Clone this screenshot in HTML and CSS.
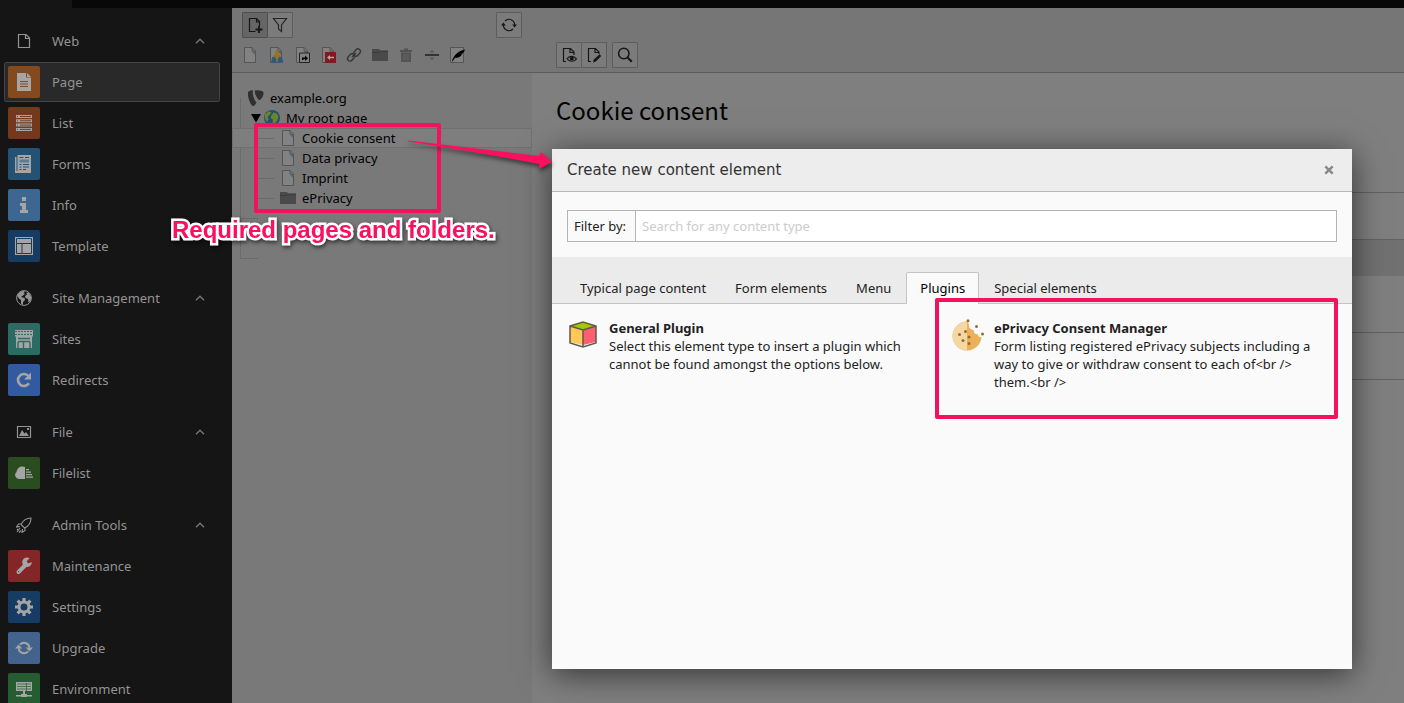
FILE: index.html
```html
<!DOCTYPE html>
<html lang="en">
<head>
<meta charset="utf-8">
<title>Create new content element</title>
<link rel="stylesheet" href="styles.css">
</head>
<body>
<svg class="defs" aria-hidden="true">
  <defs>
    <symbol id="chevron" viewBox="0 0 10 6"><path d="M1 5.2 5 1.2 9 5.2" fill="none" stroke="currentColor" stroke-width="1.4"/></symbol>
    <symbol id="doc" viewBox="0 0 16 16"><path d="M2.500.5h7.500l3.500 3.500v11.500h-11z" fill="#828282" stroke="#555"/><path d="M10 .5v3.500h3.500v4L10 4z" fill="#636363" stroke="#555" stroke-width=".6"/></symbol>
    <symbol id="folder" viewBox="0 0 16 16"><path d="M0 2h7l1 1.500h8V14H0z" fill="#4a4a4a"/><path d="M0 5.500h7l1-1.200h8" fill="none" stroke="#3b3b3b"/></symbol>
    <symbol id="page-outline" viewBox="0 0 16 16"><path d="M2.500 1.500h7.500l3.500 3.500v9.500h-11zM9.500 1.500v4h4" fill="none" stroke="currentColor" stroke-width="1.200"/></symbol>
    <symbol id="sync" viewBox="0 0 18 16"><path d="M5 4.600A5.300 5.300 0 0 1 14.300 7.500M13 11.400A5.300 5.300 0 0 1 3.700 8.500" fill="none" stroke="currentColor" stroke-width="2"/><path d="M10.800 7.500H18L14.400 11.500zM0 8.500h7.200L3.600 4.500z" fill="currentColor"/></symbol>
    <symbol id="sync-thin" viewBox="0 0 16 16"><path d="M4 4A5.600 5.600 0 0 1 13.600 8M12 12A5.600 5.600 0 0 1 2.400 8" fill="none" stroke="currentColor" stroke-width="1.200"/><path d="M11.200 7.500h4.800L13.600 10.500zM0 8.500h4.800L2.400 5.500z" fill="currentColor"/></symbol>
  </defs>
</svg>

<div class="topbar"></div>
<div class="app">
  <nav class="sidebar" aria-label="Modules">
    <section class="group">
      <button class="row head"><svg class="glyph" viewBox="0 0 16 16"><use href="#page-outline"/></svg><span>Web</span><svg class="chev"><use href="#chevron"/></svg></button>
      <a class="row active" href="#"><span class="tile orange"><svg viewBox="0 0 18 18"><path d="M2 0h9v4.500h5V18H2zM12 0l4 4h-4z"/><path d="M5 8.500h8M5 11h8M5 13.500h8" stroke="#84491c"/></svg></span><span>Page</span></a>
      <a class="row" href="#"><span class="tile rust"><svg viewBox="0 0 18 18"><path d="M1 1h16v3H1zM1 5.300h16v3H1zM1 9.600h16v3H1zM1 13.900h16v3H1z"/><path d="M5 2.500h11M5 6.800h11M5 11.100h11M5 15.400h11M2 2.500h1M2 6.800h1M2 11.100h1M2 15.400h1" stroke="#74391d"/></svg></span><span>List</span></a>
      <a class="row" href="#"><span class="tile blue"><svg viewBox="0 0 18 18"><path d="M0 2h1.500v14h1V0H16v18H0z"/><path d="M4.500 2.500h4M10 2.500h4M4.500 9.500h2M8 9.500h6M4.500 12h2M8 12h6M4.500 14.500h2M8 14.500h3" stroke="#245274"/><path d="M4.500 4.500h9.500v3H4.500z" fill="#66798a"/></svg></span><span>Forms</span></a>
      <a class="row" href="#"><span class="tile light"><svg viewBox="0 0 18 18"><path d="M7 1h4v4H7zM5 7h6v7h2v3H5v-3h2v-4H5z"/></svg></span><span>Info</span></a>
      <a class="row" href="#"><span class="tile navy"><svg viewBox="0 0 18 18"><path d="M0 0h18v18H0z"/><path d="M1.500 6.500V1.500h15v15h-15v-10h15M7 7v9.500" fill="none" stroke="#173c63"/></svg></span><span>Template</span></a>
    </section>
    <section class="group">
      <button class="row head"><svg class="glyph" viewBox="0 0 16 16"><circle cx="8" cy="8" r="7.400" fill="none" stroke="currentColor" stroke-width="1"/><path d="M1 5.500 4 2l3-1.200 2 1L7.500 3 9 4 7 5.500 5 7l3.500 1L9 10l-2 2v3l-2-1.500V10L3 8.500zM10 2.500l3 .5 2.200 4-.7 4-2 1.500L12 9l-2.500-1L9 6l2-1.500z" fill="currentColor"/></svg><span>Site Management</span><svg class="chev"><use href="#chevron"/></svg></button>
      <a class="row" href="#"><span class="tile teal"><svg viewBox="0 0 18 18"><path d="M0 0h18v6.500H0zM1 6h16v12H1z"/><path d="M0 1.500h18M0 4.500h18" stroke="#2a6c63" stroke-dasharray="2 1"/><path d="M3 8.500h12M3 11.500h12M3 12v6M15 12v6M8.500 12v6" stroke="#2a6c63" stroke-width="1.400"/></svg></span><span>Sites</span></a>
      <a class="row" href="#"><span class="tile royal"><svg viewBox="0 0 18 18"><path d="M14 12.300A6 6 0 1 1 13.500 5" fill="none" stroke="#a5a5a5" stroke-width="2.600"/><path d="M16 1.500v7H9z"/></svg></span><span>Redirects</span></a>
    </section>
    <section class="group">
      <button class="row head"><svg class="glyph" viewBox="0 0 16 16"><path d="M1.500 2.500h13v11h-13z" fill="none" stroke="currentColor" stroke-width="1.200"/><path d="M3 12l3-6 2.500 3.500L10 8l3 4zM11 4h2v2h-2z" fill="currentColor"/></svg><span>File</span><svg class="chev"><use href="#chevron"/></svg></button>
      <a class="row" href="#"><span class="tile green"><svg viewBox="0 0 18 18"><path d="M10 3v12H4a4 4 0 0 1-2.500-7C2 5 4 2.500 7 2.500zM11 5h3v1.200h-3zM11 7.500h5v1.200h-5zM11 10h6v1.200h-6zM11 12.500h7v1.200h-7z"/></svg></span><span>Filelist</span></a>
    </section>
    <section class="group">
      <button class="row head"><svg class="glyph" viewBox="0 0 16 16"><path d="M15 1C10 1 7 3.500 5 7.500L8.500 11C13 9 15 6 15 1zM5.500 7H2.500l-2 3 3.500-.5M9 10.500v3l-3 2 .5-3.500M1 15l3-4M3 15.500l2-2M1 13l1-1" fill="none" stroke="currentColor" stroke-width="1.100"/></svg><span>Admin Tools</span><svg class="chev"><use href="#chevron"/></svg></button>
      <a class="row" href="#"><span class="tile red"><svg viewBox="0 0 18 18"><path d="M3.500 15 11 7.500" fill="none" stroke="#a5a5a5" stroke-width="4" stroke-linecap="round"/><path d="M14.500 1.200A4.800 4.800 0 1 0 16.800 5L13.500 6.500 11.500 4.500z"/><circle cx="3.700" cy="14.600" r=".7" fill="#842528"/></svg></span><span>Maintenance</span></a>
      <a class="row" href="#"><span class="tile navy"><svg viewBox="0 0 18 18"><circle cx="9" cy="9" r="5" fill="none" stroke="#a5a5a5" stroke-width="3"/><path d="M9 0v3.500M9 14.500V18M0 9h3.500M14.500 9H18M2.600 2.600l2.500 2.500M12.900 12.900l2.500 2.500M2.600 15.400l2.500-2.500M12.900 5.100l2.500-2.500" stroke="#a5a5a5" stroke-width="3.200"/></svg></span><span>Settings</span></a>
      <a class="row" href="#"><span class="tile steel"><svg viewBox="0 0 18 16"><use href="#sync"/></svg></span><span>Upgrade</span></a>
      <a class="row" href="#"><span class="tile forest"><svg viewBox="0 0 18 18"><path d="M1 2h16v9H1zM8 11h2v3h2v1h5v1.500h-5V17H6v-.5H1V15h5v-1h2z"/><path d="M2 4h14M2 6.500h14M2 9h14M11.500 3v8" stroke="#265c32" stroke-width=".7"/></svg></span><span>Environment</span></a>
    </section>
  </nav>

  <div class="workspace">
    <header class="tree-head">
      <div class="bar">
        <div class="btns">
          <button class="btn pressed" aria-label="New page"><svg viewBox="0 0 16 16"><path d="M8.500 14.500h-6v-13h7l3 3V9M9.500 1.500v3.500h3" fill="none" stroke="#161616" stroke-width="1.200"/><path d="M12 9v7M8.500 12.500h7" stroke="#161616" stroke-width="1.800"/></svg></button>
          <button class="btn" aria-label="Filter"><svg viewBox="0 0 16 16"><path d="M1.500 1.500h13L9.500 8v6.500l-3-2.500V8z" fill="none" stroke="#262626" stroke-width="1.200"/></svg></button>
        </div>
        <button class="btn" aria-label="Refresh"><svg viewBox="0 0 16 16"><use href="#sync-thin"/></svg></button>
      </div>
      <div class="types">
        <svg viewBox="0 0 16 16"><use href="#doc"/></svg>
        <svg viewBox="0 0 16 16"><use href="#doc"/><path d="M5 14l1-6 1.500-1.500a2 2 0 1 1 3 0L12 8l1 6z" fill="#96731c"/><path d="M3 15.500l1-5 2-1 2 2 .5 4zM9.500 15.500l.5-4 2-2 2 1 1.500 5z" fill="#2f587f"/></svg>
        <svg viewBox="0 0 16 16"><use href="#doc"/><path d="M5.500 6h10v9.500h-10z" fill="#808080" stroke="#222"/><path d="M8 13v-2.500h3V8.500l3 2.700-3 2.700v-2H9.500V13z" fill="#000"/></svg>
        <svg viewBox="0 0 16 16"><use href="#doc"/><path d="M5 5h11v11H5z" fill="#83191f"/><path d="M7 10.500 10 8v1.800h4v1.400h-4V13z" fill="#aaa"/></svg>
        <svg viewBox="0 0 16 16"><g fill="none" stroke="#383838" stroke-width="1.400"><rect x="1" y="8" width="8" height="5" rx="2.500" transform="rotate(-50 5 10.500)"/><rect x="7" y="3" width="8" height="5" rx="2.500" transform="rotate(-50 11 5.500)"/><path d="M6 10l4-4"/></g></svg>
        <svg viewBox="0 0 16 16"><use href="#folder"/></svg>
        <svg viewBox="0 0 16 16"><path d="M2 3h4V1.500h4V3h4v2H2zM3 5.500h10V15H3z" fill="#535353"/><path d="M6 7v6M8 7v6M10 7v6" stroke="#6b6b6b" stroke-width=".8"/></svg>
        <svg viewBox="0 0 16 16"><path d="M1 7h14v2H1z" fill="#333"/><path d="M5.500 5.500h5L8 3zM5.500 10.500h5L8 13z" fill="#555"/></svg>
        <svg viewBox="0 0 16 16"><path d="M.5.500h13v15H.500z" fill="#828282" stroke="#555"/><path d="M2 14C4 8 8 4 15 2.500 14 5 13.500 6.500 11 7l1 .5C10 10.500 7 11 5 10.800L2.500 14.500z" fill="#000"/></svg>
      </div>
    </header>
    <header class="main-head">
      <div class="btns">
        <button class="btn" aria-label="View page"><svg viewBox="0 0 16 16"><path d="M5 14.500H2.500v-13h7l3.500 3.500v3M9 1.500v4h4" fill="none" stroke="#161616" stroke-width="1.200"/><path d="M6 11.800C8 8.500 13 8.500 15.500 11.800 13 15 8 15 6 11.800z" fill="none" stroke="#161616" stroke-width="1.100"/><circle cx="10.800" cy="11.500" r="2" fill="#161616"/></svg></button>
        <button class="btn" aria-label="Edit page"><svg viewBox="0 0 16 16"><path d="M5 14.500H2.500v-13h7l3.500 3.500v2M9 1.500v4h4" fill="none" stroke="#161616" stroke-width="1.200"/><path d="M7 15.500l.8-3 5.700-5.200 1.800 1.800-5.500 5.500z" fill="#161616"/></svg></button>
      </div>
      <button class="btn" aria-label="Search"><svg viewBox="0 0 16 16"><circle cx="6.800" cy="6.500" r="5.200" fill="none" stroke="#161616" stroke-width="1.500"/><path d="M10.500 10.500 14.800 14.800" stroke="#161616" stroke-width="2.200"/></svg></button>
    </header>
    <div class="tree">
      <ul class="nodes">
        <li class="node"><svg viewBox="0 0 16 16"><path d="M0 2C2 .5 3.500.3 5 .3 4 4 6 10 8.500 12.500 7.500 14.500 6 16 5 16 3 16-1 7 0 2zM7 .5C10 0 15 .5 15.500 2.500 16 5 13.500 9.500 11.500 10 9.500 10 6 3 7 .5z" fill="#303030"/></svg><span>example.org</span></li>
        <li class="node root"><svg class="arrow" viewBox="0 0 10 10"><path d="M0 1h10L5 9.500z"/></svg><svg viewBox="0 0 16 16"><circle cx="8" cy="8" r="8" fill="#244e75"/><path d="M1 4.500 4.500 1.500l3 .5L6 4.500 3.500 7l1 2.500L3 12 .8 8zM7 6l2.500-3.500L12 3l2.500 3-1 4-3 4-2-1.500.5-3L7 8.500z" fill="#6c852a"/></svg><span>My root page</span></li>
        <li class="node leaf current"><svg viewBox="0 0 16 16"><use href="#doc"/></svg><span>Cookie consent</span></li>
        <li class="node leaf"><svg viewBox="0 0 16 16"><use href="#doc"/></svg><span>Data privacy</span></li>
        <li class="node leaf"><svg viewBox="0 0 16 16"><use href="#doc"/></svg><span>Imprint</span></li>
        <li class="node leaf"><svg viewBox="0 0 16 16"><use href="#folder"/></svg><span>ePrivacy</span></li>
        <li class="node stub"></li>
        <li class="node"></li>
        <li class="node stub"></li>
      </ul>
    </div>
    <main class="content">
      <h1>Cookie consent</h1>
      <div class="cells"><div></div><div class="band"></div><div></div><div></div><div></div></div>
    </main>
  </div>
</div>

<div class="modal" role="dialog" aria-labelledby="modal-title">
  <header class="modal-head"><h2 id="modal-title">Create new content element</h2><button class="close" aria-label="Close"><svg viewBox="0 0 10 10"><path d="M1.300 1.300l7.400 7.400M8.700 1.300 1.300 8.700"/></svg></button></header>
  <div class="filter"><label for="filter">Filter by:</label><input id="filter" type="text" placeholder="Search for any content type"></div>
  <div class="tabs" role="tablist">
    <button role="tab">Typical page content</button><button role="tab">Form elements</button><button role="tab">Menu</button><button role="tab" class="on" aria-selected="true">Plugins</button><button role="tab">Special elements</button>
  </div>
  <div class="plugins">
    <a class="plugin" href="#"><svg viewBox="0 0 32 32"><path d="M3 7l13 3v16L3 23z" fill="#ffc857"/><path d="M29 7l-13 3v16l13-3z" fill="#ff5f6f"/><path d="M3 7l13-4 13 4-13 4z" fill="#a4c800"/><path d="M3 7l13-4 13 4v17l-13 4-13-4zM3 7l13 4 13-4M16 11v17" fill="none" stroke="#5d5a50" stroke-width="1.500"/></svg><span><strong>General Plugin</strong>Select this element type to insert a plugin which cannot be found amongst the options below.</span></a>
    <a class="plugin" href="#"><svg viewBox="0 0 32 32"><path d="M15 2.500A14.500 14.500 0 1 0 29.500 18c-3 1-4-2-3.500-3-3 1-5-2-4-4-4 0-6-4-5-6z" fill="#eab05a"/><path d="M15 2.500a14.500 14.500 0 0 0 0 29z" fill="#f5d7a4"/><g fill="#9a6834"><circle cx="16" cy="1.800" r="1.500"/><circle cx="24.500" cy="7.500" r="1.500"/><circle cx="30.500" cy="15" r="1.500"/><circle cx="13.500" cy="12.500" r="1.500"/><circle cx="7.500" cy="15.500" r="1.500"/><circle cx="17" cy="18" r="1.500"/><circle cx="11" cy="21.500" r="1.500"/><circle cx="17" cy="24.500" r="1.500"/></g></svg><span><strong>ePrivacy Consent Manager</strong>Form listing registered ePrivacy subjects including a way to give or withdraw consent to each of&lt;br /&gt; them.&lt;br /&gt;</span></a>
  </div>
</div>

<div class="mark mark-tree"></div>
<div class="mark mark-plugin"></div>
<svg class="pointer" viewBox="0 0 146 36"><path d="M1 4.500 132 20 134 16 145 26 132 33 132 28Q70 16 1 5.500z"/></svg>
<p class="note">Required pages and folders.</p>
</body>
</html>
```
FILE: styles.css
```css
* { box-sizing: border-box; }
body {
  margin: 0;
  height: 100vh;
  overflow: hidden;
  display: flex;
  flex-direction: column;
  background: #151515;
  font: 13px/18px "Noto Sans", Verdana, sans-serif;
  color: #222;
}
button { font: inherit; color: inherit; border: 0; padding: 0; background: none; }
a { color: inherit; text-decoration: none; }
.defs { position: absolute; width: 0; height: 0; }

.topbar { flex: none; height: 8px; margin-left: 72px; background: #080808; }
.app { flex: 1; min-height: 0; display: flex; }

/* module menu */
.sidebar {
  flex: none;
  width: 232px;
  padding: 13px 12px 0 4px;
  overflow: hidden;
  color: #949494;
}
.group { margin-bottom: 12px; }
.row {
  display: flex;
  align-items: center;
  width: 100%;
  height: 40px;
  margin-bottom: 1px;
  padding: 0 14px 0 3px;
  border: 1px solid transparent;
  border-radius: 2px;
  text-align: left;
}
.row.active { background: #292929; border-color: #444; }
.glyph { width: 16px; height: 16px; margin: 0 20px 0 8px; }
.chev { width: 10px; height: 6px; margin-left: auto; color: #777; }
.tile {
  display: grid;
  place-items: center;
  width: 32px;
  height: 32px;
  margin-right: 12px;
  border-radius: 2px;
}
.tile svg { width: 18px; height: 18px; fill: #a5a5a5; color: #a5a5a5; }
.orange { background: #84491c; }
.rust { background: #74391d; }
.blue { background: #245274; }
.light { background: #3d6790; }
.navy { background: #173c63; }
.teal { background: #2a6c63; }
.royal { background: #315aa0; }
.green { background: #2a4d20; }
.red { background: #842528; }
.steel { background: #42638c; }
.forest { background: #265c32; }

/* page tree and content */
.workspace {
  flex: 1;
  display: grid;
  grid-template-columns: 300px 1fr;
  grid-template-rows: 65px 1fr;
  background: #7f7f7f;
}
.tree-head, .main-head { background: #767676; border-bottom: 1px solid #5c5c5c; }
.tree-head { padding: 4px 10px; }
.bar { display: flex; justify-content: space-between; }
.btns { display: flex; }
.btn {
  display: grid;
  place-items: center;
  width: 26px;
  height: 26px;
  border: 1px solid #5d5d5d;
  border-radius: 1px;
  background: #7b7b7b;
  color: #161616;
}
.btns .btn + .btn { width: 25px; border-left: 0; }
.btns .btn.pressed { background: #666; border-color: #4e4e4e; }
.btn svg { width: 16px; height: 16px; }
.types { display: flex; gap: 10px; margin-top: 9px; }
.types svg { width: 16px; height: 16px; }
.main-head { display: flex; align-items: flex-end; gap: 5px; padding: 4px 24px; }

.tree { padding-top: 15px; background: #797979; color: #000; }
.nodes {
  list-style: none;
  margin: 0;
  padding: 0;
  background: linear-gradient(#6a6a6a, #6a6a6a) 8px 10px / 1px 160px no-repeat;
}
.node {
  display: flex;
  align-items: center;
  gap: 6px;
  height: 20px;
  padding-left: 16px;
}
.node svg { width: 16px; height: 16px; }
.node .arrow { width: 10px; height: 10px; margin-right: -3px; }
.root { padding-left: 19px; }
.leaf {
  padding-left: 48px;
  background: linear-gradient(#6a6a6a, #6a6a6a) 26px 10px / 16px 1px no-repeat;
}
.stub { background: linear-gradient(#6a6a6a, #6a6a6a) 8px 10px / 18px 1px no-repeat; }
.current { background-color: #7e7e7e; box-shadow: inset 0 0 0 1px #707070; }

.content { padding: 20px 0 0 24px; }
h1 { margin: 0; font: 400 24px/34px "Noto Sans CJK SC", sans-serif; color: #000; }
.cells { margin-top: 65px; }
.cells div { height: 47px; border-top: 1px solid #626262; }
.cells .band { height: 37px; background: #717171; }
.cells .band + div { height: 56px; border-top: 0; }

/* dialog */
.modal {
  position: absolute;
  inset: 149px 52px 34px 552px;
  background: #fafafa;
  box-shadow: 0 5px 30px rgba(0, 0, 0, .6);
}
.modal-head {
  display: flex;
  align-items: center;
  justify-content: space-between;
  height: 43px;
  padding: 0 18px 0 15px;
  background: #ededed;
  border-bottom: 1px solid #b8b8b8;
}
h2 { margin: 0; font: 400 15px/20px "DejaVu Sans", Verdana, sans-serif; color: #333; }
.close { width: 10px; height: 10px; line-height: 0; }
.close svg { width: 10px; height: 10px; stroke: #888; stroke-width: 2.4; }
.filter { display: flex; padding: 18px 15px 15px; }
.filter label {
  padding: 6px 9px 6px 6px;
  border: 1px solid #b4b4b4;
  border-right: 0;
}
.filter input {
  flex: 1;
  min-width: 0;
  height: 32px;
  padding: 0 6px;
  border: 1px solid #b4b4b4;
  background: #fff;
  font: inherit;
}
.filter input::placeholder { color: #ccc; opacity: 1; }
.tabs {
  display: flex;
  gap: 1px;
  height: 47px;
  padding: 15px 14px 0;
  background: #ebebeb;
  border-bottom: 1px solid #c4c4c4;
}
.tabs button { height: 32px; padding: 0 13px 2px; border: 1px solid transparent; border-bottom: 0; }
.tabs .on {
  background: #fafafa;
  border-color: #c4c4c4;
  border-radius: 2px 2px 0 0;
  color: #000;
}
.plugins { display: grid; grid-template-columns: 1fr 1fr; padding: 15px; }
.plugin { display: flex; gap: 10px; padding-right: 24px; }
.plugin svg { flex: none; width: 32px; height: 32px; }
.plugin strong { display: block; }

/* annotations laid over the interface */
.mark { position: absolute; border: 4px solid #f3125e; border-radius: 2px; }
.mark-tree { left: 254px; top: 123px; width: 187px; height: 90px; }
.mark-plugin { left: 935px; top: 298px; width: 403px; height: 121px; }
.pointer {
  position: absolute;
  left: 407px;
  top: 136px;
  width: 146px;
  height: 36px;
  overflow: visible;
  fill: #fb1060;
  filter: drop-shadow(1px 3px 2px rgba(0, 0, 0, .5));
}
.note {
  position: absolute;
  left: 172px;
  top: 216px;
  margin: 0;
  font: 700 24px/28px "Liberation Sans", Arial, sans-serif;
  color: #fb1060;
  white-space: nowrap;
  -webkit-text-stroke: 5px #fff;
  stroke-linejoin: round;
  paint-order: stroke fill;
  filter: drop-shadow(1px 2px 2px rgba(0, 0, 0, .6));
}
```
